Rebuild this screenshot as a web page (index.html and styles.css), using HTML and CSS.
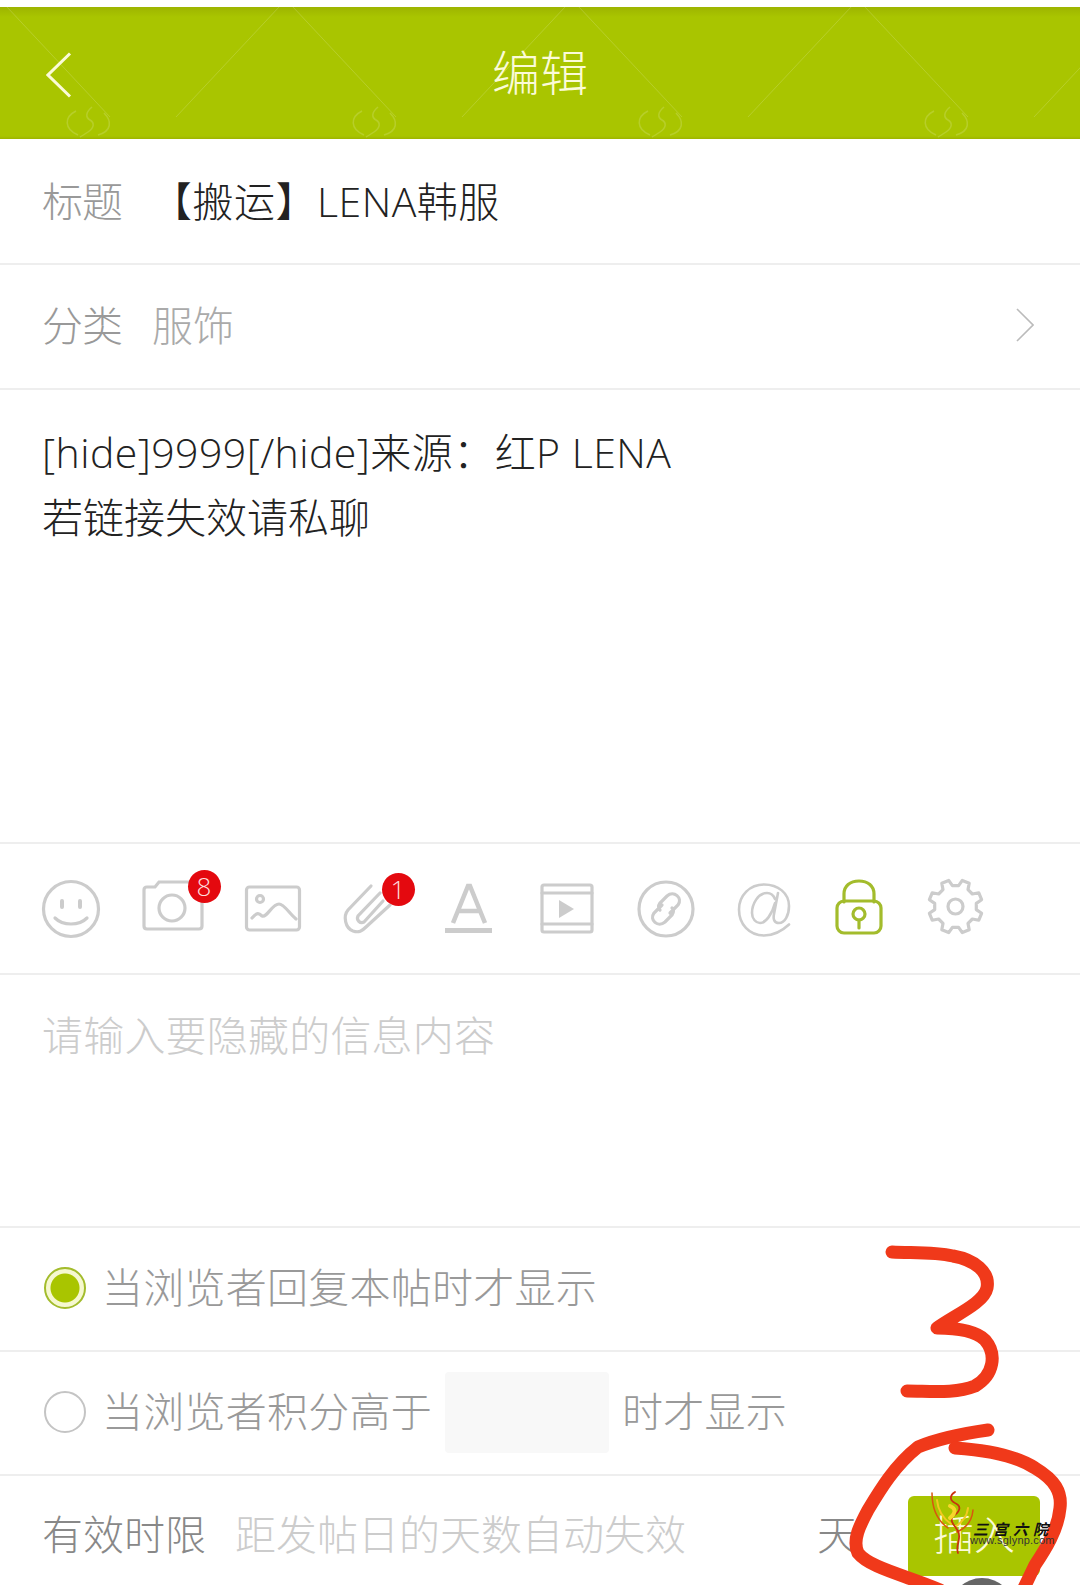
FILE: index.html
```html
<!DOCTYPE html>
<html lang="zh-CN">

<head>
    <meta charset="UTF-8">
    <meta name="viewport" content="width=device-width, initial-scale=1.0">
    <title>编辑</title>
    <link rel="stylesheet" href="styles.css">
</head>

<body>
    <div class="page">
        <header class="topbar">
            <svg class="topbar-pattern" width="1080" height="132">
                <defs>
                    <pattern id="wm" width="286" height="132" patternUnits="userSpaceOnUse">
                        <path d="M176 110L279 0M293 0L396 110" transform="translate(-286 0)" fill="none" stroke="#fff" stroke-opacity=".16"/>
                        <path d="M176 110L279 0M293 0L396 110" fill="none" stroke="#fff" stroke-opacity=".16"/>
                        <path d="M76 104c-12 6-12 18 2 24M104 106c8 8 8 18-6 22M92 100c-6 5-7 10-2 13s4 8-2 12-6 4-8 5" fill="none" stroke="#fff" stroke-opacity=".16" stroke-width="1.500"/>
                    </pattern>
                </defs>
                <rect width="1080" height="132" fill="url(#wm)"/>
            </svg>
            <svg class="back" width="26" height="46" viewBox="0 0 26 46">
                <path d="M24 1.500L2 23l22 21.500" fill="none" stroke="#fbfbd8" stroke-width="3"/>
            </svg>
            <h1>编辑</h1>
        </header>

        <div class="row row-title">
            <span class="label">标题</span>
            <span class="title-value">【搬运】LENA韩服</span>
        </div>

        <div class="row row-category">
            <span class="label">分类</span>
            <span class="category-value">服饰</span>
            <svg class="more" width="18" height="34" viewBox="0 0 18 34">
                <path d="M1 1l16 16L1 33" fill="none" stroke="#bbb" stroke-width="1.600"/>
            </svg>
        </div>

        <div class="content"><span class="content-first">[hide]9999[/hide]来源：红P LENA</span><br>若链接失效请私聊</div>

        <div class="toolbar">
            <div class="tool">
                <svg width="60" height="60" viewBox="0 0 60 60" class="ico">
                    <circle cx="30" cy="30" r="27.500"/>
                    <path d="M14 39c8 8 24 8 32 0"/>
                    <path d="M21 22v6M39 22v6" stroke-width="4"/>
                </svg>
            </div>
            <div class="tool">
                <svg width="60" height="60" viewBox="-2 0 60 60" class="ico">
                    <path d="M2 11q0-3 3-3h8l4-5h28q15 0 15 5v39q0 3-3 3H5q-3 0-3-3z"/>
                    <circle cx="30" cy="29" r="13"/>
                </svg>
                <span class="badge badge-camera">8</span>
            </div>
            <div class="tool">
                <svg width="60" height="60" viewBox="-5 0 60 60" class="ico">
                    <rect x="3.500" y="8" width="53" height="43" rx="3"/>
                    <circle cx="17" cy="20" r="3.500"/>
                    <path d="M9 39c5-6 7-5 10-2 5 2 10-12 17-12 5 0 10 9 17 15"/>
                </svg>
            </div>
            <div class="tool">
                <svg width="60" height="60" viewBox="0 0 60 60" class="ico">
                    <path d="M34 7L11 31c-5 6-3 18 5 21 6 2 9 0 13-4l24-22M43 14L21 37c-2 4 2 8 6 6l19-21"/>
                </svg>
                <span class="badge badge-clip">1</span>
            </div>
            <div class="tool">
                <svg width="60" height="60" viewBox="0 0 60 60" class="ico">
                    <path d="M18 44L33 7h2l15 37M23 32h22" stroke-width="4.500" stroke-linecap="butt"/>
                    <path d="M10 51.500h47" stroke-width="5" stroke-linecap="butt"/>
                </svg>
            </div>
            <div class="tool">
                <svg width="60" height="60" viewBox="-3 0 60 60" class="ico">
                    <rect x="5" y="6" width="50" height="47" rx="2"/>
                    <path d="M5 14h50M5 45h50"/>
                    <path d="M22 21l15 9-15 9z" fill="#ccc" stroke="none"/>
                </svg>
            </div>
            <div class="tool">
                <svg width="60" height="60" viewBox="-4 0 60 60" class="ico">
                    <circle cx="30" cy="30" r="27"/>
                    <path d="M26 26l-8 8c-5 7 4 15 11 9l7-7c2-3 2-5 0-7M34 34l8-8c5-7-4-15-11-9l-7 7c-2 3-2 5 0 7"/>
                </svg>
            </div>
            <div class="tool">
                <svg width="60" height="60" viewBox="0 0 60 60" class="ico ico-thin">
                    <path d="M58 45.500C50 53 42 56.500 33 56.500 18 56.500 8 45 8 30.500 8 16 19 5.500 33 5.500 47 5.500 58 14 58 27 58 36 54 44 48 44 43 44 42 40 43 35L47 14M44 20C42 15 38 14 36 14 27 14 21 25 21 34 21 40 25 44 29 44 35 44 41 35 44 24"/>
                </svg>
            </div>
            <div class="tool">
                <svg width="60" height="60" viewBox="0 0 60 60" class="ico ico-on">
                    <path d="M15 23v-8c0-8 6-13 15-13s15 5 15 13v8"/>
                    <rect x="8" y="22" width="44" height="32" rx="7"/>
                    <circle cx="30" cy="35" r="6"/>
                    <path d="M30 41v8"/>
                </svg>
            </div>
            <div class="tool">
                <svg width="60" height="60" viewBox="-27.500 -27.500 60 60" class="ico">
                    <circle r="7.500"/>
                    <path stroke-linejoin="round" d="M20.800 3.100L26.100 6.800 23.300 13.700 16.900 12.500 12.500 16.900 13.700 23.300 6.800 26.100 3.100 20.800-3.100 20.800-6.800 26.100-13.700 23.300-12.500 16.900-16.900 12.500-23.300 13.700-26.100 6.800-20.800 3.100-20.800-3.100-26.100-6.800-23.300-13.700-16.900-12.500-12.500-16.900-13.700-23.300-6.800-26.100-3.100-20.800 3.100-20.800 6.800-26.100 13.700-23.300 12.500-16.900 16.900-12.500 23.300-13.700 26.100-6.800 20.800-3.100z"/>
                </svg>
            </div>
        </div>

        <div class="hide-input">请输入要隐藏的信息内容</div>

        <div class="row row-radio">
            <span class="radio radio-on"></span>
            <span class="radio-text">当浏览者回复本帖时才显示</span>
        </div>

        <div class="row row-radio">
            <span class="radio"></span>
            <span class="radio-text">当浏览者积分高于</span>
            <span class="credit-box"></span>
            <span class="radio-text">时才显示</span>
        </div>

        <div class="row-limit">
            <span class="limit-label">有效时限</span>
            <span class="limit-hint">距发帖日的天数自动失效</span>
            <span class="limit-unit">天</span>
            <button class="insert" type="button">插入</button>
        </div>

        <!-- red marks drawn on the screenshot, and the site stamp -->
        <svg class="marks" width="1080" height="1585" viewBox="0 0 1080 1585">
            <circle cx="982" cy="1610" r="32" fill="#666"/>
            <g fill="none" stroke-linecap="round">
                <path d="M937 1500C938 1511 944 1519 951 1524M968 1508C967 1517 962 1522 955 1527" stroke="#f4c820" stroke-width="2"/>
                <path d="M932 1493C932 1510 938 1521 948 1528M973 1510C972 1522 966 1528 957 1532" stroke="#d9560f" stroke-width="1.500"/>
                <path d="M955 1492C950 1495 949 1500 955 1503 962 1506 960 1512 953 1516 949 1521 955 1526 958 1531 962 1539 955 1545 958 1553" stroke="#c9320e" stroke-width="1.800"/>
                <path d="M950 1506C955 1508 957 1512 950 1518" stroke="#f7d52a" stroke-width="4"/>
            </g>
            <g fill="none" stroke="#f0391a" stroke-width="13" stroke-linecap="round" stroke-linejoin="round">
                <path d="M892 1252C915 1253 935 1252 953 1256 975 1260 990 1272 987 1288 984 1303 955 1315 937 1328 955 1328 975 1330 985 1340 997 1354 994 1375 975 1386 955 1394 930 1391 907 1391"/>
                <path d="M988 1430C960 1434 935 1440 918 1447 895 1465 880 1490 868 1510 860 1525 852 1540 858 1553 870 1568 905 1575 940 1590"/>
                <path d="M955 1448C985 1450 1015 1455 1035 1468 1055 1480 1062 1492 1060 1508 1058 1530 1045 1550 1035 1565L1023 1590"/>
            </g>
            <text x="973" y="1535" class="stamp-name">三宫六院</text>
            <text x="970" y="1544" class="stamp-url">www.sglynp.com</text>
        </svg>
    </div>
</body>

</html>
```

FILE: styles.css
```css
/* edit post screen */
* {
    box-sizing: border-box;
}

html,
body {
    margin: 0;
    padding: 0;
    background-color: #fff;
}

.page {
    position: relative;
    width: 1080px;
    height: 1585px;
    overflow: hidden;
    padding-top: 7px;
    font-family: "Open Sans", "Noto Sans CJK SC", sans-serif;
    font-size: 41px;
    font-weight: 300;
    color: #222;
}

.topbar {
    position: relative;
    height: 132px;
    display: flex;
    align-items: center;
    justify-content: center;
    padding-bottom: 6px;
    background: linear-gradient(#9db400, #a9c500 10px, #a9c500 129px, #9db400);
}

.topbar-pattern {
    position: absolute;
    top: 0;
    left: 0;
}

.back {
    position: absolute;
    left: 46px;
    top: 45px;
}

.topbar h1 {
    position: relative;
    margin: 0;
    font-size: 48px;
    font-weight: 300;
    color: #fbfbd8;
}

.row {
    display: flex;
    align-items: center;
    padding: 0 42px;
    border-bottom: 2px solid #eee;
}

.label {
    color: #999;
    letter-spacing: -1px;
}

.row-title {
    height: 126px;
    padding-bottom: 4px;
}

.row-title .title-value {
    margin-left: 29px;
    letter-spacing: .5px;
    color: #222;
}

.row-category {
    height: 125px;
    padding-bottom: 8px;
}

.category-value {
    margin-left: 30px;
    color: #aaa;
}

.more {
    margin-left: auto;
    margin-right: 4px;
    margin-top: 4px;
}

.content {
    height: 454px;
    padding: 30px 42px 0;
    line-height: 65px;
    border-bottom: 2px solid #eee;
}

.content-first {
    letter-spacing: .45px;
}

.toolbar {
    height: 131px;
    display: flex;
    align-items: center;
    gap: 38.5px;
    padding-left: 41px;
    border-bottom: 2px solid #eee;
}

.tool {
    position: relative;
    width: 60px;
    height: 60px;
}

.ico {
    display: block;
    overflow: visible;
    fill: none;
    stroke: #ccc;
    stroke-width: 3.2;
    stroke-linecap: round;
}

.ico-thin {
    stroke-width: 2.6;
}

.ico-on {
    stroke: #a3bc2c;
}

.badge {
    position: absolute;
    width: 33px;
    height: 33px;
    border-radius: 50%;
    background-color: #e4090f;
    color: #fdd;
    font-size: 26px;
    line-height: 33px;
    text-align: center;
}

.badge-camera {
    left: 48px;
    top: -9px;
}

.badge-clip {
    left: 45px;
    top: -6px;
}

.hide-input {
    height: 253px;
    padding: 31px 42px 0;
    line-height: 58px;
    letter-spacing: .2px;
    color: #ccc;
    border-bottom: 2px solid #eee;
}

.row-radio {
    height: 124px;
    padding-bottom: 2px;
    color: #999;
}

.radio-text {
    padding-bottom: 6px;
    letter-spacing: .25px;
}

.radio {
    flex: none;
    width: 42px;
    height: 42px;
    margin: 0 16px 0 2px;
    border-radius: 50%;
    border: 2px solid #c4c4c4;
}

.radio-on {
    border-color: #a3bc2c;
    background: radial-gradient(circle, #a9c500 14px, #f6f8d0 15px);
}

.credit-box {
    width: 164px;
    height: 81px;
    margin: 0 13px 0 13px;
    border-radius: 4px;
    background-color: #f8f8f8;
}

.row-limit {
    height: 110px;
    display: flex;
    align-items: flex-start;
    padding: 18px 40px 0 42px;
}

.limit-label,
.limit-hint,
.limit-unit {
    line-height: 80px;
}

.limit-label {
    color: #888;
}

.limit-hint {
    margin-left: 29px;
    color: #ccc;
}

.limit-unit {
    margin-left: auto;
    margin-right: 50px;
    color: #888;
}

.insert {
    width: 132px;
    height: 80px;
    margin-top: 2px;
    padding: 0 0 8px;
    border: none;
    border-radius: 6px;
    background-color: #a9c500;
    color: #fbfbd8;
    font: inherit;
}

.marks {
    position: absolute;
    top: 0;
    left: 0;
}

.stamp-name {
    font-family: "Noto Sans CJK SC", sans-serif;
    font-size: 15px;
    font-weight: 700;
    font-style: italic;
    letter-spacing: 5px;
    fill: #111;
}

.stamp-url {
    font-family: "Liberation Sans", sans-serif;
    font-size: 11px;
    letter-spacing: .2px;
    fill: #333;
}
```
